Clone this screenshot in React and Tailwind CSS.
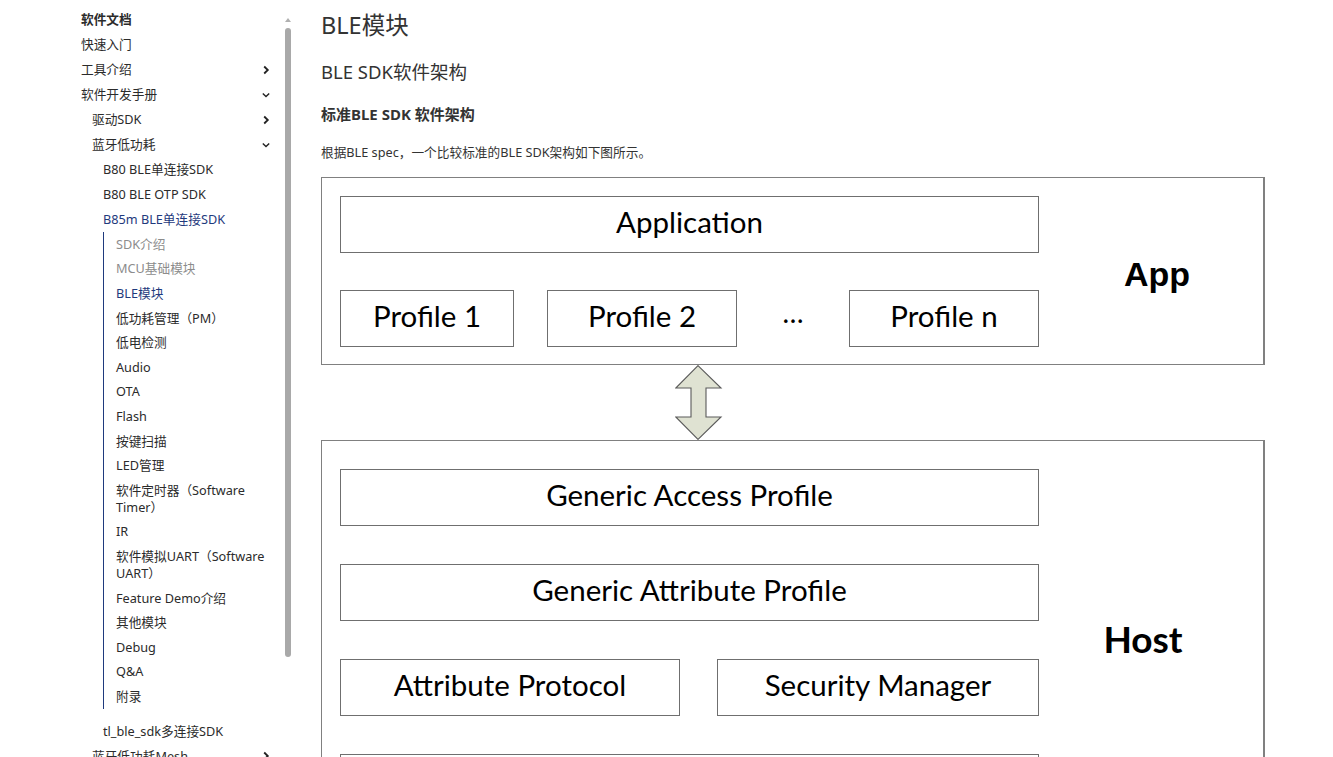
const nav = [
  { t: '软件文档', lv: 0, bold: true },
  { t: '快速入门', lv: 0 },
  { t: '工具介绍', lv: 0, ch: 'right' },
  { t: '软件开发手册', lv: 0, ch: 'down' },
  { t: '驱动SDK', lv: 1, ch: 'right' },
  { t: '蓝牙低功耗', lv: 1, ch: 'down' },
  { t: 'B80 BLE单连接SDK', lv: 2 },
  { t: 'B80 BLE OTP SDK', lv: 2 },
  { t: 'B85m BLE单连接SDK', lv: 2, active: true },
];

const pages = [
  { t: 'SDK介绍', muted: true },
  { t: 'MCU基础模块', muted: true },
  { t: 'BLE模块', active: true },
  { t: '低功耗管理（PM）' },
  { t: '低电检测' },
  { t: 'Audio' },
  { t: 'OTA' },
  { t: 'Flash' },
  { t: '按键扫描' },
  { t: 'LED管理' },
  { t: '软件定时器（Software Timer）' },
  { t: 'IR' },
  { t: '软件模拟UART（Software UART）' },
  { t: 'Feature Demo介绍' },
  { t: '其他模块' },
  { t: 'Debug' },
  { t: 'Q&A' },
  { t: '附录' },
];

const after = [
  { t: 'tl_ble_sdk多连接SDK', lv: 2 },
  { t: '蓝牙低功耗Mesh', lv: 1, ch: 'right' },
  { t: 'Zigbee', lv: 1, ch: 'right' },
];

const indent = ['pl-0', 'pl-[11px]', 'pl-[22px]'];

function Chevron({ dir }) {
  return (
    <svg width="10" height="10" viewBox="0 0 10 10" className="shrink-0 mr-[4px]">
      {dir === 'right' ? (
        <path d="M3.2 1.5 L6.8 5 L3.2 8.5" fill="none" stroke="#222" strokeWidth="1.8" />
      ) : (
        <path d="M1.8 3.5 L5 6.6 L8.2 3.5" fill="none" stroke="#222" strokeWidth="1.4" />
      )}
    </svg>
  );
}

function NavItem({ item }) {
  const color = item.active ? 'text-[#1f3a7d]' : 'text-[#2b2b2b]';
  return (
    <div className={`flex items-center justify-between py-[4px] leading-[17px] ${indent[item.lv]} ${color} ${item.bold ? 'font-bold' : ''}`}>
      <span>{item.t}</span>
      {item.ch && <Chevron dir={item.ch} />}
    </div>
  );
}

function Box({ children, className = '' }) {
  return (
    <div className={`flex items-center justify-center border border-[#6f6f6f] h-[57px] pb-[4px] text-[29.5px] text-black font-['Lato','Open_Sans',sans-serif] ${className}`}>
      {children}
    </div>
  );
}

function Arrow() {
  return (
    <svg width="48" height="75" viewBox="0 0 48 75" className="ml-[354px] block">
      <path
        d="M23 0.6 L46 23 L31 23 L31 52 L46 52 L23 74.4 L0.8 52 L16 52 L16 23 L0.8 23 Z"
        fill="#dfe2d2"
        stroke="#5a5a5a"
        strokeWidth="1.1"
        strokeLinejoin="miter"
      />
    </svg>
  );
}

export default function App() {
  return (
    <div className="flex bg-white min-h-[757px] font-['Noto_Sans','Noto_Sans_CJK_SC',sans-serif]">
      <aside className="flex w-[295px] shrink-0 pl-[81px] h-[757px] overflow-hidden">
        <nav className="w-[194px] pt-[7px] text-[12.7px]">
          {nav.map((it) => (
            <NavItem key={it.t} item={it} />
          ))}
          <div className="ml-[22px] border-l border-[#1f3a7d] pl-[12px] mb-[10px]">
            {pages.map((p) => (
              <div
                key={p.t}
                className={`py-[3.8px] leading-[17px] ${
                  p.active ? 'text-[#1f3a7d]' : p.muted ? 'text-[#8c8c8c]' : 'text-[#2b2b2b]'
                }`}
              >
                {p.t}
              </div>
            ))}
          </div>
          {after.map((it) => (
            <NavItem key={it.t} item={it} />
          ))}
        </nav>
        <div className="ml-[10px] w-[6px] flex flex-col items-center pt-[18px]">
          <div className="w-0 h-0 border-l-[3px] border-r-[3px] border-b-[4px] border-l-transparent border-r-transparent border-b-[#b0b0b0]" />
          <div className="mt-[6px] w-[6px] h-[629px] rounded-[3px] bg-[#a9a9a9]" />
        </div>
      </aside>

      <main className="ml-[26px] w-[944px] pt-[9px] text-[#333]">
        <h1 className="text-[23.5px] leading-[32px]">BLE模块</h1>
        <h2 className="mt-[18px] text-[18.5px] leading-[26px]">BLE SDK软件架构</h2>
        <h3 className="mt-[19px] text-[15px] leading-[20px] font-bold">标准BLE SDK 软件架构</h3>
        <p className="mt-[19px] text-[12.7px] leading-[18px]">根据BLE spec，一个比较标准的BLE SDK架构如下图所示。</p>

        <div className="mt-[16px]">
          <div className="flex border border-[#808080] border-r-2 h-[188px] pl-[18px] pt-[18px]">
            <div className="w-[699px] flex flex-col">
              <Box className="h-[57px]">Application</Box>
              <div className="mt-[37px] flex items-center">
                <Box className="w-[174px]">Profile 1</Box>
                <Box className="ml-[33px] w-[190px]">Profile 2</Box>
                <div className="w-[112px] text-center text-[28px] leading-[20px] pb-[14px] text-black font-['Lato',sans-serif]">…</div>
                <Box className="w-[190px]">Profile n</Box>
              </div>
            </div>
            <div className="flex-1 flex items-center justify-center pl-[12px] pb-[12px]">
              <span className="text-[34px] font-bold text-black font-['Liberation_Sans',Arial,sans-serif]">App</span>
            </div>
          </div>

          <Arrow />

          <div className="flex border border-[#808080] border-r-2 pl-[18px] pt-[28px] pb-[40px]">
            <div className="w-[699px] flex flex-col gap-[38px]">
              <Box>Generic Access Profile</Box>
              <Box>Generic Attribute Profile</Box>
              <div className="flex gap-[37px]">
                <Box className="w-[340px]">Attribute Protocol</Box>
                <Box className="flex-1">Security Manager</Box>
              </div>
              <Box>Logical Link Control and Adaptation Protocol</Box>
            </div>
            <div className="flex-1 flex items-center justify-center pr-[16px] pb-[2px]">
              <span className="text-[37px] font-bold text-black font-['Lato',sans-serif]">Host</span>
            </div>
          </div>
        </div>
      </main>
    </div>
  );
}
